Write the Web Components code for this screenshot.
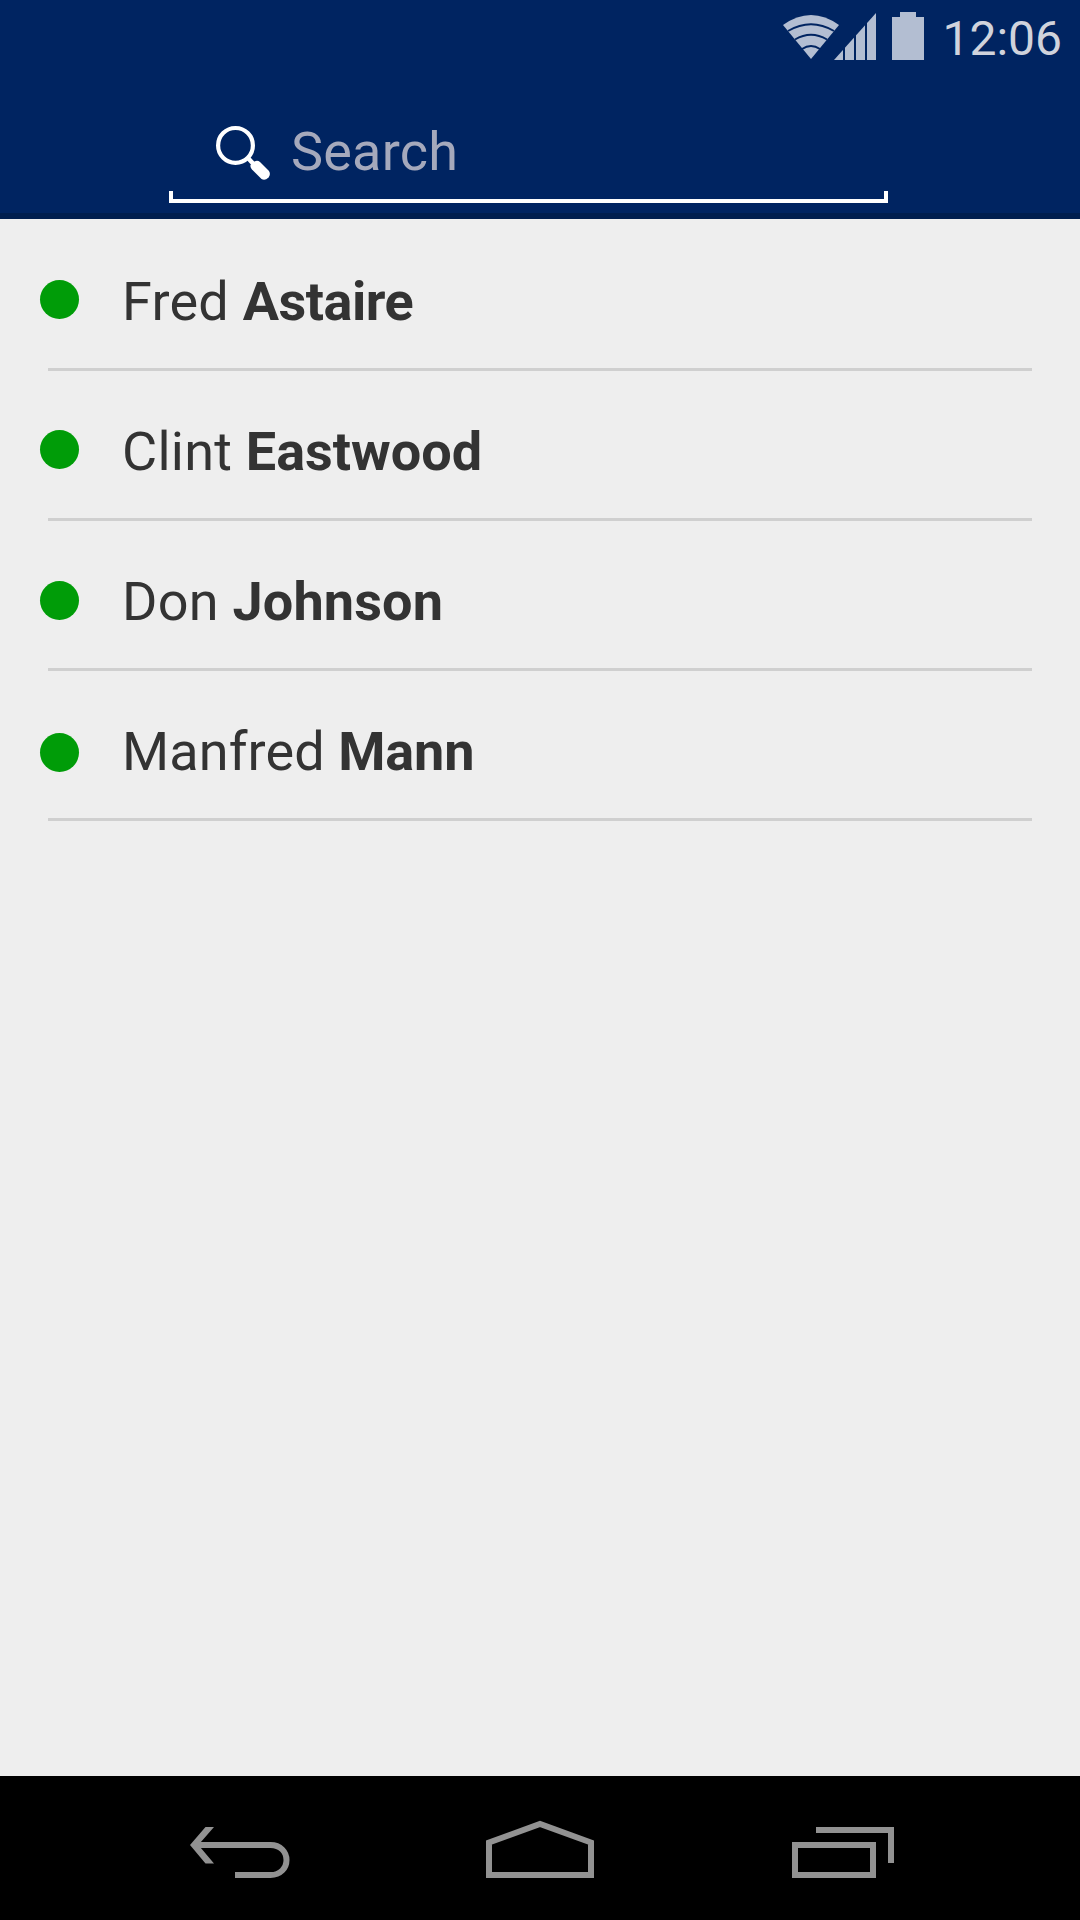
<!DOCTYPE html>
<html lang="en">
<head>
<meta charset="utf-8">
<title>Contacts</title>
<style>
html,body{margin:0;height:100%;background:#eee}
body{font-family:Roboto,sans-serif}
</style>
</head>
<body>
<contacts-app></contacts-app>
<script>
function define(name, html){
  const t=document.createElement('template');
  t.innerHTML=html;
  customElements.define(name, class extends HTMLElement{
    constructor(){super();this.attachShadow({mode:'open'}).appendChild(t.content.cloneNode(true));}
  });
}
define('status-bar', `<style>
:host{display:flex;height:74px;color:#d0d3dc;padding-right:18px;box-sizing:border-box;justify-content:flex-end}
svg{display:block;flex:none;margin-right:17px}
span{font-size:48px;line-height:56px;padding-top:11px;white-space:nowrap}
</style>
<svg width="142" height="74" viewBox="783 0 142 74" fill="#b3bed2">
<path d="M811 59L783 25Q811 5 839 25Z"/>
<path d="M788 31Q811 17.500 834 31M795 39.500Q811 30 827 39.500M802 49Q811 43 820 49" stroke="#002461" stroke-width="2" fill="none"/>
<path d="M834 60L876 13V60Z"/>
<path d="M844 12V61M855 12V61M866 12V61" stroke="#002461" stroke-width="2"/>
<path d="M892 17H900V12H916V17H924V60H892Z"/>
</svg><span>12:06</span>`);
define('search-field', `<style>
:host{display:flex;width:719px;height:129px;margin-left:169px;box-sizing:border-box;flex-direction:column}
.row{display:flex;height:117px;padding-left:46px;align-items:flex-start}
svg{display:block}
span{font-size:54px;line-height:64px;padding-top:46px;margin-left:20px;letter-spacing:.2px;color:#a5a9bc}
.line{height:8px;border:4px solid #fff;border-top:0}
</style>
<div class="row"><svg width="56" height="117" viewBox="215 74 56 117">
<circle cx="235.500" cy="145.400" r="17.400" fill="none" stroke="#fff" stroke-width="4.200"/>
<path d="M247 157L253.500 164" stroke="#fff" stroke-width="4.500"/>
<path d="M250.500 165L254.500 161.500Q257.500 160 260 162L269 171Q271 174.500 268.500 177.500Q265 181 261.500 179L252 169.500Q250 167.500 250.500 165Z" fill="#fff"/>
</svg><span>Search</span></div><div class="line"></div>`);
define('app-header', `<style>
:host{display:flex;flex-direction:column;height:219px;background:#002461;box-sizing:border-box;border-bottom:6px solid #001e4e}
</style><status-bar></status-bar><search-field></search-field>`);
define('contact-row', `<style>
:host{display:flex;height:150px;box-sizing:border-box;padding:0 48px;flex-direction:column}
.body{display:flex;height:147px;margin-left:-8px}
.dot{width:39px;height:39px;border-radius:50%;background:#009c08;margin-top:var(--dot-top,59px)}
.name{font-size:54px;line-height:64px;margin-left:43px;padding-top:49px;color:#333;white-space:pre;letter-spacing:var(--first-spacing,.25px)}
.name ::slotted(b){font-weight:700;letter-spacing:var(--last-spacing,0)}
.line{height:3px;background:#cfcfcf}
</style><div class="body"><div class="dot"></div><div class="name"><slot></slot></div></div><div class="line"></div>`);
define('nav-bar', `<style>
:host{display:flex;height:144px;background:#000}
svg{display:block}
</style><svg width="1080" height="144" viewBox="0 1776 1080 144" fill="none" stroke="#929292" stroke-width="6">
<path d="M235 1875H270.500C280.500 1875 286.500 1868 286.500 1860S280.500 1845 270.500 1845H198"/>
<path d="M205.500 1827H214L200.500 1842.500V1847.500L214 1863.500H205.500L190 1845Z" fill="#929292" stroke="none"/>
<path d="M489 1842.500L540 1824L591 1842.500V1875H489Z"/>
<path d="M816 1830H891V1863M795 1845H873V1875H795Z"/>
</svg>`);
define('contacts-app', `<style>
:host{display:flex;flex-direction:column;width:1080px;height:1920px;background:#eee}
main{flex:1;padding-top:2px}
contact-row:nth-child(1){--last-spacing:-.5px}
contact-row:nth-child(3){--dot-top:60px;--last-spacing:.15px}
contact-row:nth-child(4){--dot-top:62px;--first-spacing:.1px;--last-spacing:-.15px}
</style><app-header></app-header>
<main><contact-row>Fred <b>Astaire</b></contact-row><contact-row>Clint <b>Eastwood</b></contact-row><contact-row>Don <b>Johnson</b></contact-row><contact-row>Manfred <b>Mann</b></contact-row></main><nav-bar></nav-bar>`);
</script>
</body>
</html>
